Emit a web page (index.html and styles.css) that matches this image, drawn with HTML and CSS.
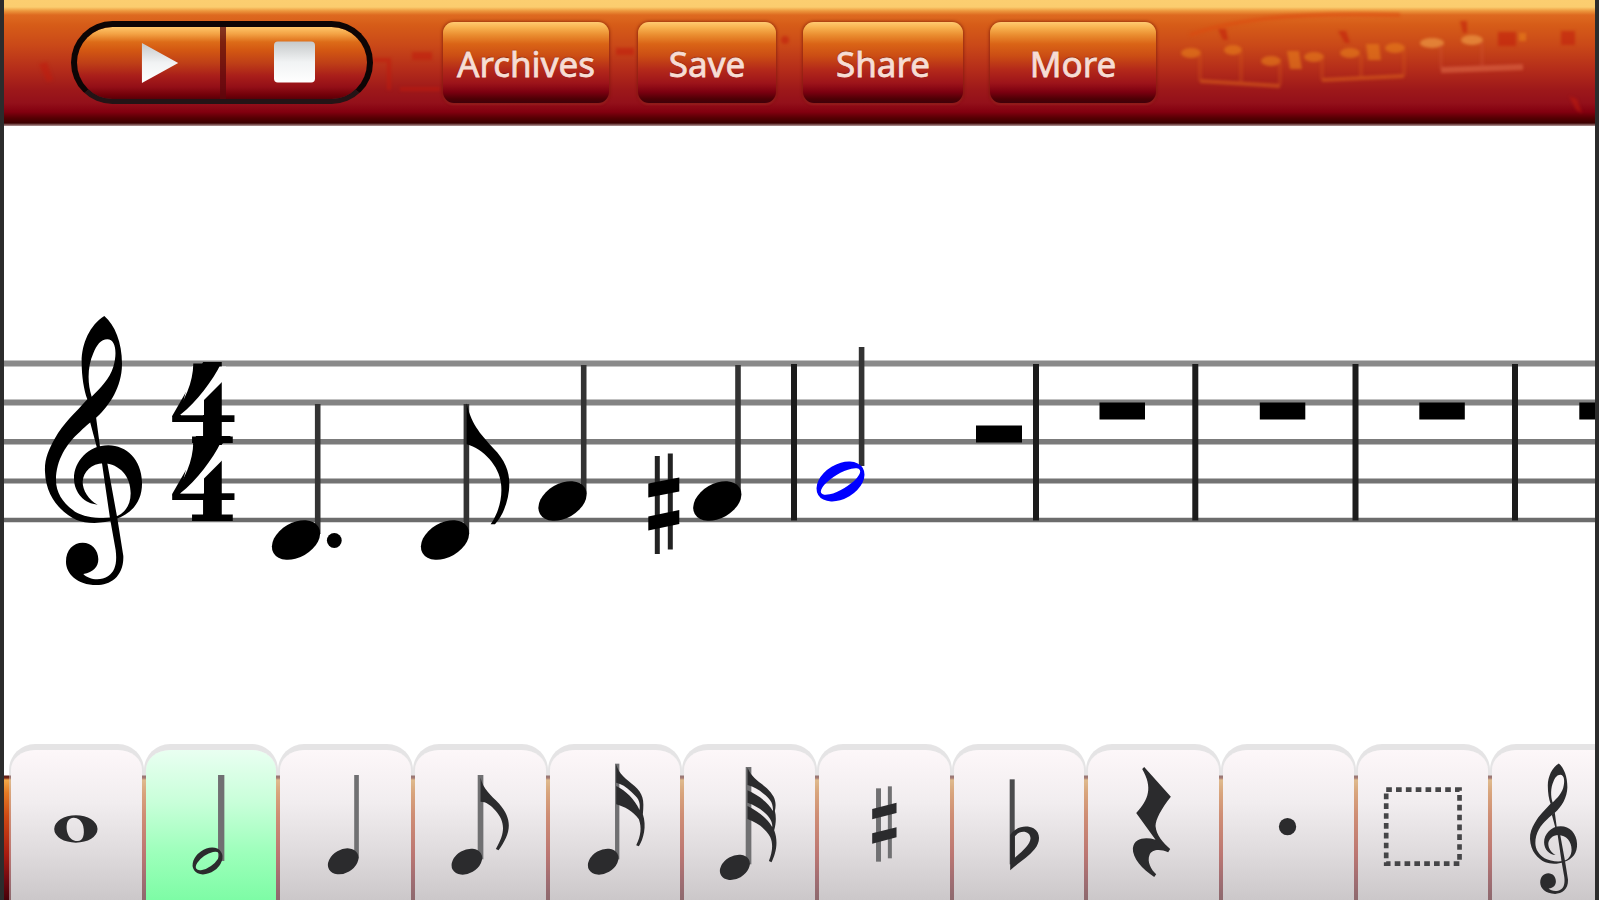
FILE: index.html
```html
<!DOCTYPE html>
<html lang="en">
<head>
<meta charset="utf-8">
<title>Score editor</title>
<link rel="stylesheet" href="styles.css">
</head>
<body>
<div class="app">
  <header class="toolbar">
    <svg class="ornament" viewBox="4 0 1591 125" aria-hidden="true">
      <g class="ornament-red">
        <path d="M39 64l8-2 6 18-6 2z"/>
        <path d="M373 58h18v32h-4v-28H373zM412 52h20v8h-20zM400 87h40v4h-40zM616 48h18v7h-18z"/>
        <circle cx="785" cy="40" r="4"/>
        <path d="M1218 29l8 0 2 11-5 0zM1338 31l8 0 4 12-5 0zM1460 21l7 0 0 12-4 0zM1498 32h18v14h-18zM1561 31h14v14h-14zM1569 96l8 3 5 14-6-3z"/>
        <path d="M1190 35Q1260 10 1400 15" fill="none" stroke="#dc4a10" stroke-width="4"/>
      </g>
      <g class="ornament-gold">
        <ellipse cx="1191" cy="53" rx="10" ry="5"/><ellipse cx="1233" cy="50" rx="9" ry="5"/>
        <ellipse cx="1271" cy="61" rx="10" ry="5"/><ellipse cx="1314" cy="57" rx="10" ry="5"/>
        <ellipse cx="1350" cy="53" rx="10" ry="5"/><ellipse cx="1395" cy="48" rx="10" ry="5"/>
        <path d="M1287 51h12l3 18h-12zM1366 44h13l2 16h-13zM1519 33h7v8h-7z"/>
        <path d="M1200 81l80 5M1322 80l82-4" fill="none" stroke-width="4"/>
        <path d="M1200 54v27M1280 63v22M1241 52v30M1322 58v22M1404 50v26M1361 55v23" fill="none" stroke-width="4" opacity=".45"/>
      </g>
      <g class="ornament-pink">
        <ellipse cx="1432" cy="43" rx="12" ry="5"/><ellipse cx="1472" cy="40" rx="11" ry="5"/>
        <path d="M1441 70l82-3" stroke-width="6"/><path d="M1441 45v24M1482 42v25" stroke-width="3" opacity=".4"/>
      </g>
    </svg>
    <div class="transport">
      <button class="transport-key" aria-label="Play">
        <svg class="glyph play" viewBox="0 0 44 44"><defs><linearGradient id="metal" x2="0" y2="1"><stop stop-color="#c6c9ca"/><stop offset=".5" stop-color="#f1f3f4"/><stop offset="1" stop-color="#fff"/></linearGradient></defs><path d="M2 1L40 22 2 43z" fill="url(#metal)"/></svg>
      </button>
      <button class="transport-key" aria-label="Stop">
        <svg class="glyph stop" viewBox="0 0 42 42"><rect width="42" height="42" rx="4" fill="url(#metal)"/></svg>
      </button>
    </div>
    <nav class="menu">
      <button class="menu-key archives">Archives</button>
      <button class="menu-key save">Save</button>
      <button class="menu-key share">Share</button>
      <button class="menu-key more">More</button>
    </nav>
  </header>

  <main class="score">
    <svg class="staff" viewBox="4 125 1591 615">
      <defs>
        <g id="clef">
          <path fill-rule="evenodd" d="M313 48C270 75 245 130 245 185C245 230 252 270 262 298C225 340 190 370 165 415C145 450 133 480 135 515C137 590 185 640 230 660C260 672 310 672 345 658C400 640 428 600 426 545C424 480 380 436 325 436C265 436 222 485 222 535C222 580 255 612 293 614C265 600 248 570 248 545C250 515 275 490 310 490C360 492 392 530 392 580C392 620 370 645 340 652C300 658 255 652 225 635C190 610 168 580 168 540C168 480 200 430 240 395C260 375 275 365 290 352C330 315 365 260 366 195C367 130 345 75 313 48ZM322 118C348 118 352 160 340 200C330 235 300 265 275 290C262 250 262 200 280 160C290 135 303 118 322 118Z"/>
          <path d="M270 365L290 440L306 490L330 655L347 750C352 790 345 815 325 828C300 845 265 838 250 822C280 818 295 800 295 778C295 750 275 728 248 728C220 728 198 750 198 785C198 820 230 855 290 855C330 855 372 830 370 768L352 655L322 490L300 440L288 350Z"/>
        </g>
        <g id="diagonal">
          <path d="M192 366.500H226V378L204 400V415H180Z" fill="#fff"/>
          <path d="M193.300 363.500H221C213 380 197 402 180 415L172 417C185 401 193 383 193.300 363.500Z"/>
        </g>
        <ellipse id="head" rx="26" ry="17.3" transform="rotate(-30)"/>
      </defs>
      <g class="lines">
        <path d="M4 363.5H1595" stroke="#8a8a8a" stroke-width="6"/>
        <path d="M4 402.5H1595" stroke="#848484" stroke-width="6"/>
        <path d="M4 441.7H1595" stroke="#7b7b7b" stroke-width="5.4"/>
        <path d="M4 481H1595" stroke="#737373" stroke-width="5"/>
        <path d="M4 520H1595" stroke="#6c6c6c" stroke-width="4.6"/>
      </g>
      <use href="#clef" transform="translate(0 300) scale(.3333)"/>
      <g class="meter">
        <text transform="translate(168 442.5) scale(.94 1)">4</text>
        <text transform="translate(168 521) scale(.94 1)">4</text>
        <use href="#diagonal"/>
        <use href="#diagonal" transform="translate(0 78.5)"/>
        <path d="M196 436H231L221 445H193Z"/>
      </g>
      <g class="bars">
        <path d="M794 364V520.500M1036 364V520.500M1195.3 364V520.500M1355.5 364V520.500M1515 364V520.500"/>
      </g>
      <g class="stems">
        <path d="M317.7 404V534M466.4 404V534M583.7 365V494M738 365V494M861.6 347V466"/>
      </g>
      <use href="#head" transform="translate(296 540)"/>
      <circle cx="334.3" cy="540.5" r="7.4"/>
      <use href="#head" transform="translate(445 540)"/>
      <path transform="translate(250 340) scale(.3333)" d="M650 190C665 260 700 290 730 325C765 360 778 395 778 430C778 480 760 525 735 553L722 553C748 515 758 470 753 430C748 380 700 325 650 313Z"/>
      <use href="#head" transform="translate(562.5 501)"/>
      <path d="M657.3 456V554M670.3 453.5V549.5" stroke="#222" stroke-width="5"/>
      <path d="M648.3 483.500L679.3 477.500V491.500L648.3 497.500ZM648.3 516.500L679.3 510V524L648.3 530.500Z"/>
      <use href="#head" transform="translate(717.3 501)"/>
      <path class="selected" transform="translate(840.5 481.5) rotate(-31)" fill-rule="evenodd" d="M-26 0a26 17.3 0 1 0 52 0a26 17.3 0 1 0-52 0ZM-22.5 0a22.5 7.6 0 1 0 45 0a22.5 7.6 0 1 0-45 0Z"/>
      <path d="M976 425.5h46v17h-46zM1099.5 402.5h45.5v17h-45.5zM1259.8 402.5h45.5v17h-45.5zM1419.3 402.5h45.5v17h-45.5zM1579.3 402.5h45v17h-45z"/>
    </svg>
  </main>

  <footer class="palette">
    <button class="key" aria-label="Whole note"><svg viewBox="29.4 30 404 480">
      <path fill-rule="evenodd" d="M165 294a65 41 0 1 0 130 0a65 41 0 1 0-130 0ZM205 272C215 252 245 258 252 285C258 312 250 330 236 330C210 332 196 298 205 272Z"/></svg></button>
    <button class="key active" aria-label="Half note"><svg viewBox="433.4 30 404 480">
      <path class="thin" d="M665 132V390" stroke-width="19"/>
      <path fill-rule="evenodd" transform="translate(624 390) rotate(-35)" d="M-49 0a49 35 0 1 0 98 0a49 35 0 1 0-98 0ZM-41 0a41 18 0 1 0 82 0a41 18 0 1 0-82 0Z"/></svg></button>
    <button class="key" aria-label="Quarter note"><svg viewBox="837.4 30 404 480">
      <path class="thin" d="M1070 132V382" stroke-width="14"/>
      <ellipse cx="1030" cy="391" rx="49" ry="35" transform="rotate(-30 1030 391)"/></svg></button>
    <button class="key" aria-label="Eighth note"><svg viewBox="41.4 30 404 480">
      <path class="thin" d="M244 132V385" stroke-width="17"/>
      <ellipse cx="203" cy="392" rx="49" ry="35" transform="rotate(-30 203 392)"/>
      <path d="M244 140C252 175 275 192 300 218C345 270 332 310 298 358L290 354C322 300 315 270 290 240C275 222 260 212 244 212Z"/></svg></button>
    <button class="key" aria-label="Sixteenth note"><svg viewBox="445.4 30 404 480">
      <path class="thin" d="M653 98V385" stroke-width="13"/>
      <ellipse cx="611" cy="392" rx="49" ry="35" transform="rotate(-30 611 392)"/>
      <path d="M650 100C658 130 680 145 705 165C730 188 735 205 730 250C742 285 732 325 718 346L710 343C724 315 727 290 718 265C700 240 675 227 650 220V165C680 180 705 205 720 237C724 210 715 200 695 182C680 168 665 158 650 155Z"/></svg></button>
    <button class="key" aria-label="Thirty-second note"><svg viewBox="849.4 30 404 480">
      <path class="thin" d="M1049 108V400" stroke-width="17"/>
      <ellipse cx="1008" cy="409" rx="48" ry="34" transform="rotate(-30 1008 409)"/>
      <path d="M1046 110C1058 140 1080 150 1104 172C1128 196 1134 212 1128 240C1133 258 1131 280 1126 298C1140 335 1130 370 1118 394L1110 390C1120 365 1124 340 1114 318C1100 292 1075 275 1046 264V225C1080 242 1105 262 1120 288C1122 272 1110 255 1095 243C1080 230 1065 222 1046 215V178C1080 194 1108 214 1122 240C1124 215 1112 202 1094 188C1080 175 1065 168 1046 162Z"/></svg></button>
    <button class="key" aria-label="Sharp"><svg viewBox="83.4 30 404 480">
      <path class="thin" d="M268 172V392" stroke-width="15"/>
      <path class="thin" d="M302 166V382" stroke-width="12"/>
      <path d="M249 234L322 215V246L249 265ZM249 307L322 289V319L249 338Z"/></svg></button>
    <button class="key" aria-label="Flat"><svg viewBox="487.4 30 404 480">
      <path d="M668 145V400" fill="none" stroke="#4b4b4d" stroke-width="15"/>
      <path fill-rule="evenodd" d="M662 312C680 285 712 282 732 292C755 306 752 335 735 355C715 380 685 395 662 418ZM676 316V380C700 360 722 340 723 322C722 300 692 295 676 316Z"/></svg></button>
    <button class="key" aria-label="Rest"><svg viewBox="891.4 30 404 480">
      <path d="M1066 108L1146 197C1118 232 1100 265 1100 285C1102 312 1122 335 1144 354L1138 364C1112 352 1088 356 1082 372C1074 392 1086 415 1102 430L1096 438C1060 415 1030 380 1032 352C1036 320 1070 318 1100 326L1042 246C1080 205 1092 170 1060 114Z"/></svg></button>
    <button class="key" aria-label="Dot"><svg viewBox="65.4 30 404 480"><circle cx="265" cy="287" r="26"/></svg></button>
    <button class="key" aria-label="Selection"><svg viewBox="469.4 30 404 480">
      <rect x="560" y="176" width="220" height="222" fill="none" stroke="#454547" stroke-width="14" stroke-dasharray="17 12.5"/></svg></button>
    <button class="key" aria-label="Clef"><svg viewBox="873.4 30 404 480">
      <use href="#clef" transform="translate(928 74) scale(.485)"/></svg></button>
  </footer>
</div>
</body>
</html>
```
FILE: styles.css
```css
* { box-sizing: border-box; }
body { margin: 0; background: #fff; font-family: "Noto Sans", "Open Sans", sans-serif; }
button { border: 0; padding: 0; margin: 0; background: none; font: inherit; }

.app {
  width: 1599px;
  height: 900px;
  border: solid #2c2c2c;
  border-width: 0 4px;
  display: flex;
  flex-direction: column;
  overflow: hidden;
}

.toolbar {
  position: relative;
  height: 126px;
  padding: 21px 0 0 67px;
  display: flex;
  align-items: flex-start;
  background: linear-gradient(#fbce70 0, #fbcd6f 7px, #ec963c 11px, #de6a20 15px, #d65c18 25px, #ca4918 45px, #b42c1a 70px, #9d181a 90px, #93101a 103px, #82000f 112px, #560003 118px, #3c0000 123px, #b59a9a 126px);
}
.ornament { position: absolute; inset: 0; width: 1591px; height: 125px; filter: blur(1.6px); }
.ornament-red { fill: #c11b0c; opacity: .55; }
.ornament-gold { fill: #e8801c; stroke: #d9601c; stroke-width: 0; opacity: .6; }
.ornament-pink { fill: #e78b3c; stroke: #d2583a; stroke-width: 0; opacity: .85; }

.transport {
  position: relative;
  width: 302px;
  height: 83px;
  display: flex;
  border: 6px solid #0d0505;
  border-bottom: 5px solid #241416;
  border-radius: 42px;
  overflow: hidden;
  background: linear-gradient(#ffc66a 0, #f3a244 7px, #dd6c18 15px, #d35812 23px, #bf3f17 36px, #a91e1a 49px, #930f17 60px, #720009 68px, #520007 73px) padding-box;
}
.transport-key { flex: 1; display: flex; align-items: flex-start; padding-top: 14px; }
.transport-key:first-child { flex: 0 0 149px; border-right: 6px solid rgba(92, 8, 12, .75); }
.glyph { display: block; }
.play { width: 42px; height: 44px; margin-left: 63px; }
.stop { width: 41px; height: 42px; margin-left: 48px; }

.menu { position: relative; display: flex; padding: 1px 0 0 70px; }
.menu-key {
  height: 81px;
  border-radius: 11px;
  color: #f7ddd4;
  font-size: 35px;
  line-height: 84px;
  text-align: center;
  text-shadow: 0 -1px 1px rgba(70, 10, 0, .55);
  -webkit-text-stroke: .8px #f7ddd4;
  background: linear-gradient(#ffca72 0, #f9b552 5px, #ea8d30 13px, #da6416 22px, #cb4d14 34px, #b3281a 48px, #9d141a 61px, #7c0010 70px, #4d0005 77px, #40000a 81px);
  box-shadow: 0 0 3px 1px rgba(110, 20, 5, .55), 0 2px 2px rgba(190, 60, 60, .4);
}
.archives { width: 166px; }
.save { width: 138px; margin-left: 29px; }
.share { width: 160px; margin-left: 27px; }
.more { width: 166px; margin-left: 27px; }

.score { height: 615px; margin-top: -1px; }
.staff { display: block; width: 1591px; height: 615px; }
.bars path { stroke: #1c1c1c; stroke-width: 6; fill: none; }
.stems path { stroke: #333; stroke-width: 5.6; fill: none; }
.meter text { font: bold 108px "DejaVu Serif", serif; }
.selected { fill: #00f; }

.palette {
  height: 160px;
  padding: 4px 0 0 5px;
  display: grid;
  grid-template-columns: repeat(12, 134.67px);
  background: linear-gradient(#fff 35px, #5a1a14 36px, #7a2414 38px, #f2a848 40px, #e47a24 53px, #d04a14 76px, #a81a10 115px, #700810 140px, #480008 160px);
}
.key {
  border: solid rgba(206, 203, 206, .52);
  border-width: 6px 2.5px 0;
  border-radius: 26px 26px 0 0;
  background: linear-gradient(#fdf7f9, #f1edef 35%, #dfdbdd 68%, #cbc7c9) padding-box;
}
.key.active { background: linear-gradient(#e9fff1, #c8ffd9 35%, #9dffbb 68%, #7dfca5) padding-box; }
.key svg {
  display: block;
  width: 134.67px;
  height: 160px;
  margin: -9.5px -1.8px 0;
  fill: #2b2b2d;
}
.thin { fill: none; stroke: #707072; }
```
